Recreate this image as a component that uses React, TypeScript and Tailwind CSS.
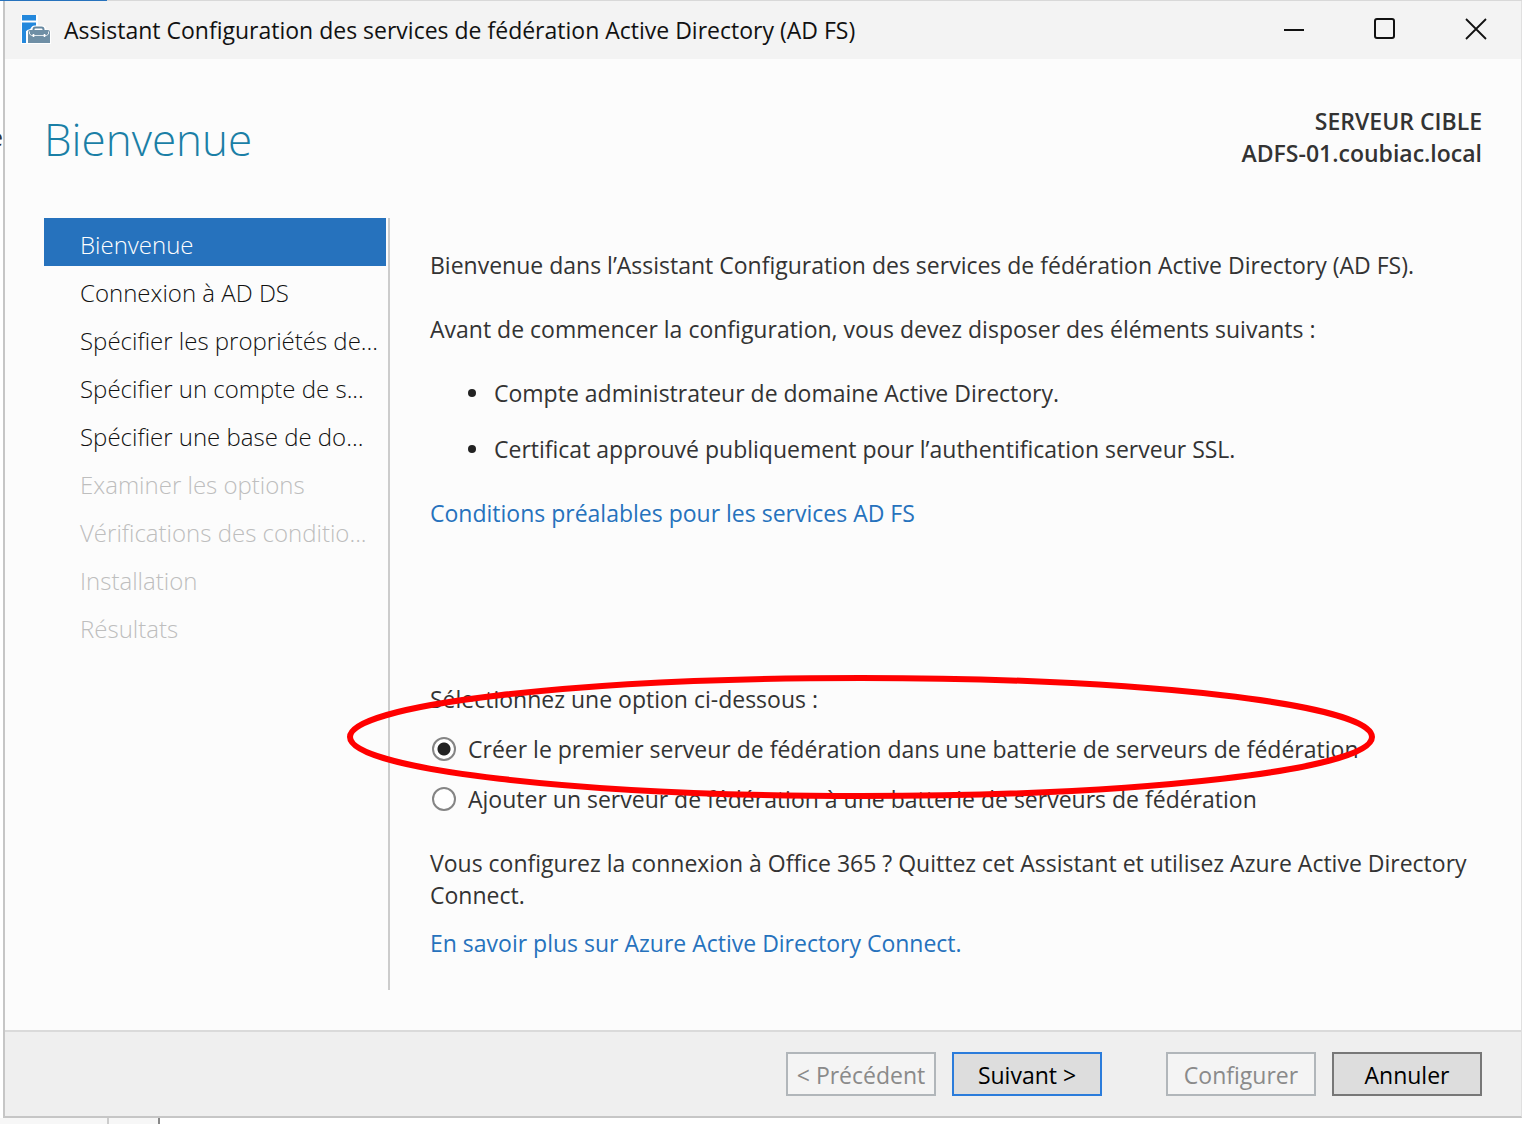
import { useState } from 'react'
import type { ReactNode } from 'react'
import clsx from 'clsx'

type Step = { label: string; enabled: boolean }

const steps: Step[] = [
  { label: 'Bienvenue', enabled: true },
  { label: 'Connexion à AD DS', enabled: true },
  { label: 'Spécifier les propriétés de...', enabled: true },
  { label: 'Spécifier un compte de s...', enabled: true },
  { label: 'Spécifier une base de do...', enabled: true },
  { label: 'Examiner les options', enabled: false },
  { label: 'Vérifications des conditio...', enabled: false },
  { label: 'Installation', enabled: false },
  { label: 'Résultats', enabled: false },
]

const requirements = [
  'Compte administrateur de domaine Active Directory.',
  'Certificat approuvé publiquement pour l’authentification serveur SSL.',
]

const options = [
  { id: 'create', label: 'Créer le premier serveur de fédération dans une batterie de serveurs de fédération' },
  { id: 'join', label: 'Ajouter un serveur de fédération à une batterie de serveurs de fédération' },
]

function ServerIcon() {
  return (
    <svg width="30" height="30" viewBox="0 0 30 30" aria-hidden="true">
      <path d="M0 0h17v29H0z" fill="#fff" />
      <path d="M1 0h14v5.500H1zM1 7.500h14V11l-4 1-3 3-3 1v12H1z" fill="#2488dc" />
      <path d="M5.500 17q0-2.500 2.500-2.500h2q0-4 4-4h7q4 0 4 4h2q3 0 3 3V29H5.500z" fill="#fff" />
      <path d="M12.500 15.500V14.500q0-2 2-2h6q2 0 2 2v1" fill="none" stroke="#6788a0" strokeWidth="2" />
      <path d="M7 17q0-2 2-2h18q2 0 2 2v11H7z" fill="#6f8fa5" />
      <path d="M8.500 16.500v2.500l2 1.500h15l2-1.500v-2.500" fill="none" stroke="#dfe7ec" strokeWidth="1" />
      <path d="M12.500 19v3M23.500 19v3" stroke="#fff" strokeWidth="1.600" />
    </svg>
  )
}

function WindowButton({ label, children }: { label: string; children: ReactNode }) {
  return (
    <button type="button" aria-label={label} className="flex h-14 w-[91px] items-center justify-center">
      <svg width="22" height="22" viewBox="0 0 22 22" fill="none" stroke="#111" strokeWidth="2" aria-hidden="true">
        {children}
      </svg>
    </button>
  )
}

function TitleBar() {
  return (
    <header className="flex h-[58px] items-start bg-[#f3f3f3] pl-4">
      <div className="flex h-[58px] flex-1 items-center gap-[13px]">
        <ServerIcon />
        <span className="text-[23px] leading-8 text-[#111]">
          Assistant Configuration des services de fédération Active Directory (AD FS)
        </span>
      </div>
      <WindowButton label="Réduire">
        <path d="M1 12h20" />
      </WindowButton>
      <WindowButton label="Agrandir">
        <rect x="1" y="1" width="19" height="19" rx="2" />
      </WindowButton>
      <WindowButton label="Fermer">
        <path d="M1 1l20 20M21 1L1 21" strokeWidth="1.800" />
      </WindowButton>
    </header>
  )
}

function FooterButton({
  children,
  primary,
  disabled,
  className,
}: {
  children: ReactNode
  primary?: boolean
  disabled?: boolean
  className?: string
}) {
  return (
    <button
      type="button"
      disabled={disabled}
      className={clsx(
        'h-11 w-[150px] border-2 pt-[2px] text-[23px] leading-8 whitespace-nowrap',
        disabled && 'border-[#b1b6ba] bg-[#f4f4f4] text-[#8a8a8a]',
        !disabled && 'bg-[#dddddd] text-black',
        !disabled && (primary ? 'border-[#2b7cdb]' : 'border-[#777777]'),
        className,
      )}
    >
      {children}
    </button>
  )
}

export default function App() {
  const [option, setOption] = useState('create')

  return (
    <div className="relative flex min-h-screen flex-col overflow-hidden bg-white font-['Open_Sans','Noto_Sans',sans-serif] text-[23px] leading-8 text-[#333]">
      {/* Edge of the server manager window behind the dialog */}
      <div className="flex h-px bg-[#d8d8d8]">
        <div className="w-[107px] bg-[#2672bd]" />
      </div>
      <div className="absolute top-[121px] left-0 w-[3px] overflow-hidden" aria-hidden="true">
        <span className="flex justify-end">e</span>
      </div>

      <div className="ml-[3px] flex flex-1 flex-col border-r border-b-2 border-l-2 border-[#c6c6c6] border-r-[#e0e0e0] bg-[#fcfcfc]">
        <TitleBar />

        <div className="flex items-start justify-between pt-[46px] pr-[39px] pl-[39px]">
          <h1 className="pt-[2px] text-[44px] leading-[64px] font-light text-[#1a7fa6]">Bienvenue</h1>
          <div className="text-right font-semibold">
            <p>SERVEUR CIBLE</p>
            <p>ADFS-01.coubiac.local</p>
          </div>
        </div>

        <div className="mt-[47px] mb-10 flex flex-1 pr-[39px] pl-[39px]">
          <nav className="w-[346px] shrink-0 border-r-2 border-[#cccccc] pr-[2px]">
            <ul>
              {steps.map((step, i) => (
                <li
                  key={step.label}
                  className={clsx(
                    'flex h-12 items-center pt-[6px] pl-9 text-[24px] font-light whitespace-nowrap',
                    i === 0 && 'bg-[#2672bd] text-white',
                    i > 0 && (step.enabled ? 'text-[#111]' : 'text-[#bebebe]'),
                  )}
                >
                  {step.label}
                </li>
              ))}
            </ul>
          </nav>

          <main className="min-w-0 flex-1 pt-[31px] pl-10">
            <p>Bienvenue dans l’Assistant Configuration des services de fédération Active Directory (AD FS).</p>
            <p className="mt-8">Avant de commencer la configuration, vous devez disposer des éléments suivants :</p>
            <ul className="mt-8 flex flex-col gap-6 pl-[38px]">
              {requirements.map((text) => (
                <li key={text} className="flex items-center gap-[18px]">
                  <span className="size-2 shrink-0 rounded-full bg-[#222]" />
                  {text}
                </li>
              ))}
            </ul>
            <a href="#prerequis" className="mt-8 block text-[#2672bd]">
              Conditions préalables pour les services AD FS
            </a>

            <div className="relative mt-[154px]">
              <fieldset>
                <legend>Sélectionnez une option ci-dessous :</legend>
                {options.map(({ id, label }) => (
                  <label key={id} className="mt-[18px] flex items-center gap-3 pl-[2px] whitespace-nowrap">
                    <input
                      type="radio"
                      name="option"
                      value={id}
                      checked={option === id}
                      onChange={() => setOption(id)}
                      className="size-6 shrink-0 appearance-none rounded-full border-2 border-[#858585] bg-white checked:bg-[radial-gradient(circle,#222_0_6px,#fff_7px)]"
                    />
                    {label}
                  </label>
                ))}
              </fieldset>
              {/* Hand-drawn highlight around the first option */}
              <svg
                className="pointer-events-none absolute -top-[9px] -left-[84px] max-w-none"
                width="1030"
                height="126"
                viewBox="0 0 1030 126"
                aria-hidden="true"
              >
                <ellipse cx="515" cy="63" rx="511" ry="59" fill="none" stroke="#f00" strokeWidth="6" />
              </svg>
            </div>

            <p className="mt-8">
              Vous configurez la connexion à Office 365 ? Quittez cet Assistant et utilisez Azure Active Directory
              Connect.
            </p>
            <a href="#azure-ad-connect" className="mt-4 block text-[#2672bd]">
              En savoir plus sur Azure Active Directory Connect.
            </a>
          </main>
        </div>

        <footer className="flex justify-end gap-4 border-t-2 border-[#dadada] bg-[#efefef] py-5 pr-[39px]">
          <FooterButton disabled>&lt; Précédent</FooterButton>
          <FooterButton primary>Suivant &gt;</FooterButton>
          <FooterButton disabled className="ml-12">
            Configurer
          </FooterButton>
          <FooterButton>Annuler</FooterButton>
        </footer>
      </div>

      <div className="flex h-[6px]">
        <div className="w-[109px] border-r-2 border-[#cccccc] bg-[#f7f7f7]" />
        <div className="w-[51px] border-r-2 border-[#888888] bg-[#f7f7f7]" />
      </div>
    </div>
  )
}
